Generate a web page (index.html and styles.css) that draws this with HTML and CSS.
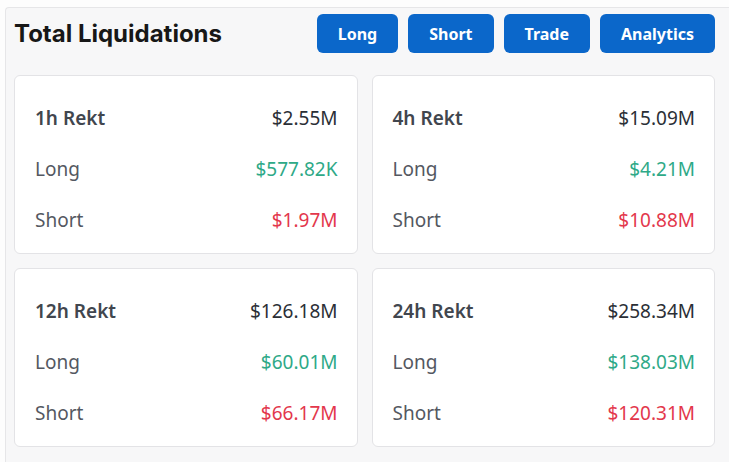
FILE: index.html
```html
<!DOCTYPE html>
<html>
<head>
<meta charset="utf-8">
<link rel="stylesheet" href="styles.css">
</head>
<body>
<div class="panel">
  <div class="header">
    <h1 class="title">Total Liquidations</h1>
    <div class="buttons">
      <button class="btn">Long</button>
      <button class="btn">Short</button>
      <button class="btn">Trade</button>
      <button class="btn">Analytics</button>
    </div>
  </div>
  <div class="grid">
    <div class="card">
      <div class="row head"><span class="label">1h Rekt</span><span class="total">$2.55M</span></div>
      <div class="row"><span class="label">Long</span><span class="long">$577.82K</span></div>
      <div class="row"><span class="label">Short</span><span class="short">$1.97M</span></div>
    </div>
    <div class="card">
      <div class="row head"><span class="label">4h Rekt</span><span class="total">$15.09M</span></div>
      <div class="row"><span class="label">Long</span><span class="long">$4.21M</span></div>
      <div class="row"><span class="label">Short</span><span class="short">$10.88M</span></div>
    </div>
    <div class="card">
      <div class="row head"><span class="label">12h Rekt</span><span class="total">$126.18M</span></div>
      <div class="row"><span class="label">Long</span><span class="long">$60.01M</span></div>
      <div class="row"><span class="label">Short</span><span class="short">$66.17M</span></div>
    </div>
    <div class="card">
      <div class="row head"><span class="label">24h Rekt</span><span class="total">$258.34M</span></div>
      <div class="row"><span class="label">Long</span><span class="long">$138.03M</span></div>
      <div class="row"><span class="label">Short</span><span class="short">$120.31M</span></div>
    </div>
  </div>
</div>
</body>
</html>
```
FILE: styles.css
```css
html, body {
  margin: 0;
  padding: 0;
  background: #fdfdfd;
  overflow: hidden;
  height: 100%;
}
body {
  font-family: "Noto Sans", "Open Sans", sans-serif;
}
.panel {
  margin: 7px 0 0 5px;
  background: #f7f7f8;
  border-top: 1px solid #e6e6e8;
  border-left: 1px solid #e6e6e8;
  border-top-left-radius: 4px;
  padding: 6px 14px 20px 8px;
  height: 100%;
  box-sizing: border-box;
}
.header {
  display: flex;
  justify-content: space-between;
  align-items: center;
  height: 39px;
  margin-bottom: 22px;
}
.title {
  margin: 0;
  font-family: Inter, sans-serif;
  font-weight: 700;
  font-size: 24px;
  letter-spacing: 0;
  color: #171717;
}
.buttons {
  display: flex;
  gap: 10px;
}
.btn {
  height: 39px;
  padding: 0 21px;
  border: none;
  border-radius: 6px;
  background: #0b67ca;
  color: #fff;
  font-family: "Noto Sans", sans-serif;
  font-weight: 700;
  font-size: 16px;
}
.grid {
  display: grid;
  grid-template-columns: 1fr 1fr;
  gap: 14px;
}
.card {
  background: #fff;
  border: 1px solid #e3e3e6;
  border-radius: 6px;
  height: 179px;
  box-sizing: border-box;
  padding: 16px 19px 10px 20px;
}
.row {
  display: flex;
  justify-content: space-between;
  align-items: center;
  height: 51px;
  font-size: 19px;
  color: #545861;
}
.row.head .label {
  font-weight: 600;
  color: #41464e;
}
.total { color: #2b2f36; }
.long { color: #2ea987; }
.short { color: #e3374c; }
```
